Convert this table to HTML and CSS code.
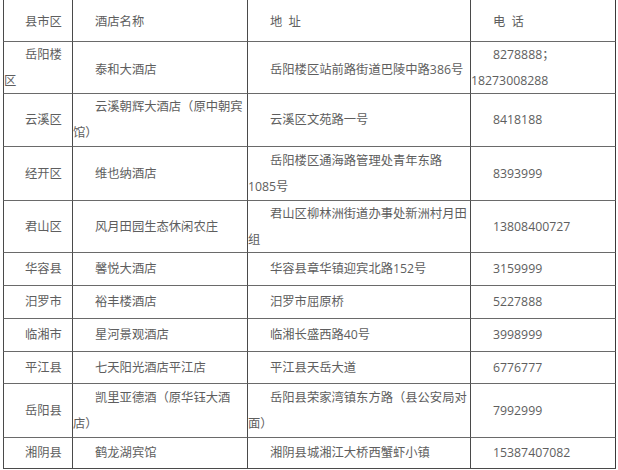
FILE: index.html
```html
<!DOCTYPE html>
<html lang="zh-CN">
<head>
<meta charset="utf-8">
<title>酒店列表</title>
<link rel="stylesheet" href="styles.css">
</head>
<body>
<div class="table">
  <div class="cell head c1"><p>县市区</p></div>
  <div class="cell head"><p>酒店名称</p></div>
  <div class="cell head"><p>地 址</p></div>
  <div class="cell head c4"><p>电 话</p></div>

  <div class="cell c1"><p>岳阳楼区</p></div>
  <div class="cell lo"><p>泰和大酒店</p></div>
  <div class="cell lo"><p>岳阳楼区站前路街道巴陵中路386号</p></div>
  <div class="cell c4"><p>8278888；18273008288</p></div>

  <div class="cell c1"><p>云溪区</p></div>
  <div class="cell"><p>云溪朝辉大酒店（原中朝宾馆）</p></div>
  <div class="cell"><p>云溪区文苑路一号</p></div>
  <div class="cell c4"><p>8418188</p></div>

  <div class="cell c1"><p>经开区</p></div>
  <div class="cell"><p>维也纳酒店</p></div>
  <div class="cell"><p>岳阳楼区通海路管理处青年东路<span class="nw">1085号</span></p></div>
  <div class="cell c4"><p>8393999</p></div>

  <div class="cell c1"><p>君山区</p></div>
  <div class="cell"><p>风月田园生态休闲农庄</p></div>
  <div class="cell"><p>君山区柳林洲街道办事处新洲村月田组</p></div>
  <div class="cell c4"><p>13808400727</p></div>

  <div class="cell c1"><p>华容县</p></div>
  <div class="cell"><p>馨悦大酒店</p></div>
  <div class="cell"><p>华容县章华镇迎宾北路152号</p></div>
  <div class="cell c4"><p>3159999</p></div>

  <div class="cell c1"><p>汨罗市</p></div>
  <div class="cell"><p>裕丰楼酒店</p></div>
  <div class="cell"><p>汨罗市屈原桥</p></div>
  <div class="cell c4"><p>5227888</p></div>

  <div class="cell c1"><p>临湘市</p></div>
  <div class="cell"><p>星河景观酒店</p></div>
  <div class="cell"><p>临湘长盛西路40号</p></div>
  <div class="cell c4"><p>3998999</p></div>

  <div class="cell c1"><p>平江县</p></div>
  <div class="cell"><p>七天阳光酒店平江店</p></div>
  <div class="cell"><p>平江县天岳大道</p></div>
  <div class="cell c4"><p>6776777</p></div>

  <div class="cell c1"><p>岳阳县</p></div>
  <div class="cell"><p>凯里亚德酒（原华钰大酒店）</p></div>
  <div class="cell"><p>岳阳县荣家湾镇东方路（县公安局对面）</p></div>
  <div class="cell c4"><p>7992999</p></div>

  <div class="cell c1"><p>湘阴县</p></div>
  <div class="cell"><p>鹤龙湖宾馆</p></div>
  <div class="cell"><p>湘阴县城湘江大桥西蟹虾小镇</p></div>
  <div class="cell c4"><p>15387407082</p></div>
</div>
</body>
</html>
```

FILE: styles.css
```css
html, body {
  margin: 0;
  padding: 0;
  background: #ffffff;
}

body {
  padding-left: 3px;
  font-family: "Open Sans", "Noto Sans CJK SC", sans-serif;
  font-size: 12.3px;
  color: #5e5e5e;
}

.table {
  display: grid;
  width: 613px;
  grid-template-columns: 69px 175px 223px 146px;
  grid-template-rows: 41px 52px 53px 54px 52px 33px 33px 33px 32px 54px 31px;
  border-bottom: 1px solid #4a4a4a;
}

.cell {
  display: flex;
  flex-direction: column;
  justify-content: center;
  border-left: 1px solid #4a4a4a;
  border-top: 1px solid #6a6a6a;
  min-width: 0;
}

.cell p {
  margin: 0;
  line-height: 26px;
  text-indent: 22px;
}

.cell .nw {
  white-space: nowrap;
}

.cell.c1 p {
  text-indent: 21px;
}

.cell.c4 {
  border-right: 1px solid #3a3a3a;
}

.cell.lo {
  padding-top: 4px;
}

.cell.head {
  border-top: none;
  padding-top: 2px;
}

.cell.head p {
  word-spacing: 3px;
}
```
